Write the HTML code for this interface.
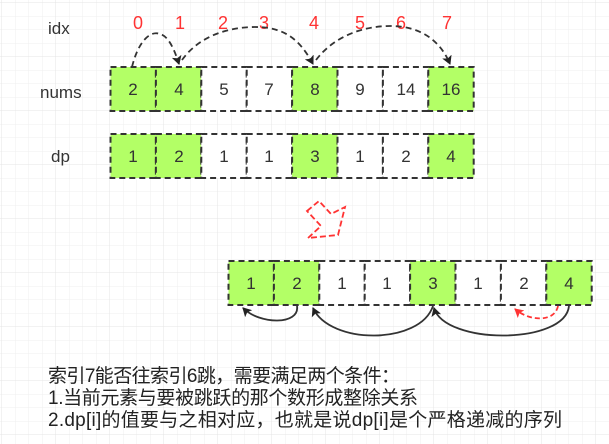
<!DOCTYPE html>
<html><head><meta charset="utf-8"><style>
html,body{margin:0;padding:0;background:#fff;}
svg{display:block;}
text{font-family:"Liberation Sans","Noto Sans CJK SC",sans-serif;}
</style></head><body>
<svg width="609" height="444" xmlns="http://www.w3.org/2000/svg">
<defs>
<pattern id="g" x="1.5" y="2.5" width="13.5" height="13.5" patternUnits="userSpaceOnUse">
<path d="M0 0H13.5M0 0V13.5" stroke="#efefef" stroke-width="1" fill="none"/>
</pattern>
<pattern id="G" x="1.5" y="2.5" width="54" height="54" patternUnits="userSpaceOnUse">
<path d="M0 0H54M0 0V54" stroke="#e4e4e4" stroke-width="1" fill="none"/>
</pattern>
<marker id="ab" markerWidth="10" markerHeight="10" refX="8" refY="5" orient="auto" markerUnits="userSpaceOnUse"><path d="M0 0L9 5L0 10L2 5Z" fill="#222"/></marker>
<marker id="ar" markerWidth="10" markerHeight="10" refX="8" refY="5" orient="auto" markerUnits="userSpaceOnUse"><path d="M0 0L9 5L0 10L2 5Z" fill="#f33"/></marker>
</defs>
<rect width="609" height="444" fill="#fff"/>
<rect width="609" height="444" fill="url(#g)"/>
<rect width="609" height="444" fill="url(#G)"/>

<g font-size="17" fill="#333">
<text x="48" y="34">idx</text>
<text x="40" y="98">nums</text>
<text x="51" y="162">dp</text>
</g>
<g font-size="18" fill="#f33" text-anchor="middle">
<text x="138" y="29">0</text><text x="180" y="29">1</text><text x="223" y="29">2</text><text x="264" y="29">3</text>
<text x="314" y="29">4</text><text x="360" y="29">5</text><text x="401" y="29">6</text><text x="447" y="29">7</text>
</g>

<g stroke="#333" stroke-width="2" stroke-dasharray="6,4" font-size="17">
<rect x="110.5" y="67" width="45.4" height="44" fill="#b3ff66"/>
<rect x="155.9" y="67" width="45.4" height="44" fill="#b3ff66"/>
<rect x="201.3" y="67" width="45.4" height="44" fill="#fff"/>
<rect x="246.7" y="67" width="45.4" height="44" fill="#fff"/>
<rect x="292.1" y="67" width="45.4" height="44" fill="#b3ff66"/>
<rect x="337.5" y="67" width="45.4" height="44" fill="#fff"/>
<rect x="382.9" y="67" width="45.4" height="44" fill="#fff"/>
<rect x="428.3" y="67" width="45.4" height="44" fill="#b3ff66"/>

<rect x="110.5" y="134" width="45.4" height="44" fill="#b3ff66"/>
<rect x="155.9" y="134" width="45.4" height="44" fill="#b3ff66"/>
<rect x="201.3" y="134" width="45.4" height="44" fill="#fff"/>
<rect x="246.7" y="134" width="45.4" height="44" fill="#fff"/>
<rect x="292.1" y="134" width="45.4" height="44" fill="#b3ff66"/>
<rect x="337.5" y="134" width="45.4" height="44" fill="#fff"/>
<rect x="382.9" y="134" width="45.4" height="44" fill="#fff"/>
<rect x="428.3" y="134" width="45.4" height="44" fill="#b3ff66"/>

<rect x="228.5" y="261" width="45.4" height="44" fill="#b3ff66"/>
<rect x="273.9" y="261" width="45.4" height="44" fill="#b3ff66"/>
<rect x="319.3" y="261" width="45.4" height="44" fill="#fff"/>
<rect x="364.7" y="261" width="45.4" height="44" fill="#fff"/>
<rect x="410.1" y="261" width="45.4" height="44" fill="#b3ff66"/>
<rect x="455.5" y="261" width="45.4" height="44" fill="#fff"/>
<rect x="500.9" y="261" width="45.4" height="44" fill="#fff"/>
<rect x="546.3" y="261" width="45.4" height="44" fill="#b3ff66"/>
</g>

<g font-size="17" fill="#333" text-anchor="middle">
<text x="133" y="95">2</text><text x="179" y="95">4</text><text x="224" y="95">5</text><text x="269" y="95">7</text>
<text x="315" y="95">8</text><text x="360" y="95">9</text><text x="406" y="95">14</text><text x="451" y="95">16</text>
<text x="133" y="162">1</text><text x="179" y="162">2</text><text x="224" y="162">1</text><text x="269" y="162">1</text>
<text x="315" y="162">3</text><text x="360" y="162">1</text><text x="406" y="162">2</text><text x="451" y="162">4</text>
<text x="251" y="289">1</text><text x="297" y="289">2</text><text x="342" y="289">1</text><text x="387" y="289">1</text>
<text x="433" y="289">3</text><text x="478" y="289">1</text><text x="524" y="289">2</text><text x="569" y="289">4</text>
</g>

<g fill="none" stroke="#333" stroke-width="1.8" stroke-dasharray="6,4">
<path d="M132 67C138 42 150 30 160 34C168 36 174 48 179 64" marker-end="url(#ab)"/>
<path d="M182 60C200 35 230 27 255 27C285 27 300 40 313 64" marker-end="url(#ab)"/>
<path d="M316 60C335 35 365 26 390 26C420 26 440 40 450 64" marker-end="url(#ab)"/>
</g>
<g fill="none" stroke="#333" stroke-width="1.8">
<path d="M297 306C300 325 260 325 243 308" marker-end="url(#ab)"/>
<path d="M433 306C420 345 330 345 313 308" marker-end="url(#ab)"/>
<path d="M569 306C565 345 445 345 434 308" marker-end="url(#ab)"/>
</g>
<path d="M558 306C555 322 530 322 515 309" fill="none" stroke="#f33" stroke-width="1.8" stroke-dasharray="5,3" marker-end="url(#ar)"/>
<path d="M307 211L319 201L331 214L345 207L338 235L308 238L321 226Z" fill="none" stroke="#f33" stroke-width="1.8" stroke-dasharray="6,3"/>

<g font-size="19" fill="#222" font-family="'Liberation Sans','Noto Sans CJK SC',sans-serif">
<text x="48" y="382" textLength="352">索引7能否往索引6跳，需要满足两个条件：</text>
<text x="48" y="404" textLength="370">1.当前元素与要被跳跃的那个数形成整除关系</text>
<text x="48" y="426" textLength="514">2.dp[i]的值要与之相对应，也就是说dp[i]是个严格递减的序列</text>
</g>
</svg>
</body></html>
